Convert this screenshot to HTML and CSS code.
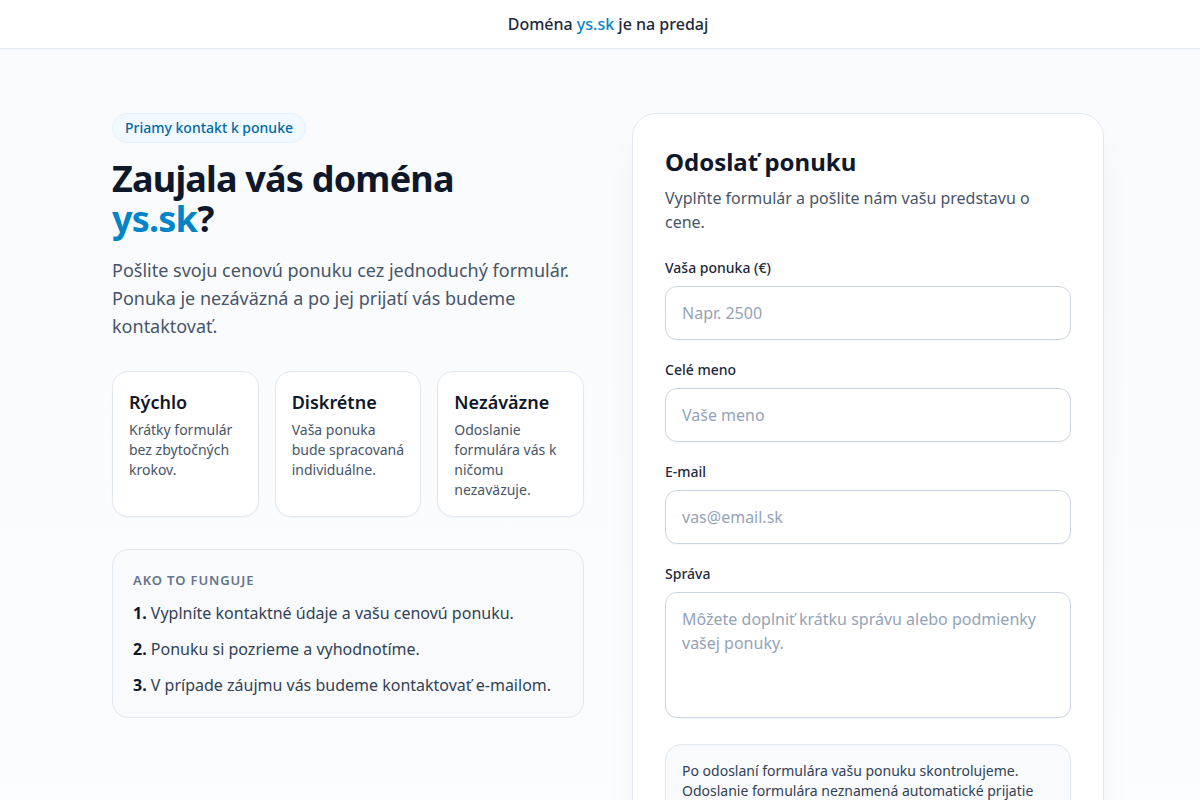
FILE: index.html
```html
<!DOCTYPE html>
<html lang="sk">
<head>
<meta charset="utf-8">
<title>Doména ys.sk je na predaj</title>
<link rel="stylesheet" href="styles.css">
</head>
<body>
<header class="topbar">
  <p class="topbar-text">Doména <span class="accent">ys.sk</span> je na predaj</p>
</header>
<main class="page">
  <section class="intro">
    <span class="badge">Priamy kontakt k ponuke</span>
    <h1 class="title">Zaujala vás doména <span class="accent">ys.sk</span>?</h1>
    <p class="lead">Pošlite svoju cenovú ponuku cez jednoduchý formulár. Ponuka je nezáväzná a po jej prijatí vás budeme kontaktovať.</p>
    <div class="features">
      <div class="feature">
        <h3 class="feature-title">Rýchlo</h3>
        <p class="feature-text">Krátky formulár bez zbytočných krokov.</p>
      </div>
      <div class="feature">
        <h3 class="feature-title">Diskrétne</h3>
        <p class="feature-text">Vaša ponuka bude spracovaná individuálne.</p>
      </div>
      <div class="feature">
        <h3 class="feature-title">Nezáväzne</h3>
        <p class="feature-text">Odoslanie formulára vás k ničomu nezaväzuje.</p>
      </div>
    </div>
    <div class="howto">
      <p class="howto-title">Ako to funguje</p>
      <ol class="steps">
        <li><b>1.</b> Vyplníte kontaktné údaje a vašu cenovú ponuku.</li>
        <li><b>2.</b> Ponuku si pozrieme a vyhodnotíme.</li>
        <li><b>3.</b> V prípade záujmu vás budeme kontaktovať e-mailom.</li>
      </ol>
    </div>
  </section>
  <section class="form-card">
    <h2 class="form-title">Odoslať ponuku</h2>
    <p class="form-sub">Vyplňte formulár a pošlite nám vašu predstavu o cene.</p>
    <form class="form">
      <label class="field">
        <span class="label">Vaša ponuka (€)</span>
        <input class="input" type="text" placeholder="Napr. 2500">
      </label>
      <label class="field">
        <span class="label">Celé meno</span>
        <input class="input" type="text" placeholder="Vaše meno">
      </label>
      <label class="field">
        <span class="label">E-mail</span>
        <input class="input" type="text" placeholder="vas@email.sk">
      </label>
      <label class="field">
        <span class="label">Správa</span>
        <textarea class="input textarea" rows="4" placeholder="Môžete doplniť krátku správu alebo podmienky vašej ponuky."></textarea>
      </label>
      <div class="note">Po odoslaní formulára vašu ponuku skontrolujeme. Odoslanie formulára neznamená automatické prijatie ponuky a zakladá len nezáväzný kontakt.</div>
    </form>
  </section>
</main>
</body>
</html>
```

FILE: styles.css
```css
* { box-sizing: border-box; }
html, body { margin: 0; padding: 0; }
body {
  font-family: "Noto Sans", "Open Sans", sans-serif;
  color: #0f172a;
  background: linear-gradient(to bottom, #f8fafc 0%, #fcfdfe 100%);
  min-height: 100vh;
}
.accent { color: #0284c7; }

.topbar {
  height: 49px;
  background: #ffffff;
  border-bottom: 1px solid #e2e8f0;
  display: flex;
  align-items: center;
  justify-content: center;
  padding-left: 16px;
}
.topbar-text {
  margin: 0;
  font-size: 16px;
  line-height: 24px;
  font-weight: 500;
  color: #1e293b;
}

.page {
  width: 992px;
  margin-left: calc(50% - 488px);
  padding-top: 64px;
  display: grid;
  grid-template-columns: 472px 472px;
  column-gap: 48px;
  align-items: start;
}

.intro { display: flex; flex-direction: column; align-items: flex-start; }
.badge {
  display: inline-block;
  font-size: 14px;
  line-height: 20px;
  font-weight: 500;
  color: #0369a1;
  background: #f0f9ff;
  border: 1px solid #e0f2fe;
  border-radius: 999px;
  padding: 4px 12px;
}
.title {
  margin: 16px 0 0;
  max-width: 420px;
  font-size: 36px;
  line-height: 40px;
  font-weight: 700;
  letter-spacing: -0.8px;
  color: #0f172a;
}
.lead {
  margin: 17px 0 0;
  font-size: 18px;
  line-height: 28px;
  color: #475569;
}

.features {
  margin-top: 31px;
  width: 100%;
  display: grid;
  grid-template-columns: repeat(3, 1fr);
  gap: 16px;
}
.feature {
  background: #ffffff;
  border: 1px solid #e2e8f0;
  border-radius: 16px;
  padding: 16px;
  box-shadow: 0 1px 2px rgba(15, 23, 42, 0.04);
}
.feature-title {
  margin: 0;
  font-size: 18px;
  line-height: 28px;
  font-weight: 600;
  color: #0f172a;
}
.feature-text {
  margin: 4px 0 0;
  font-size: 14px;
  line-height: 20px;
  color: #475569;
}

.howto {
  margin-top: 32px;
  width: 100%;
  background: #f8fafc;
  border: 1px solid #e2e8f0;
  border-radius: 16px;
  padding: 20px;
}
.howto-title {
  margin: 0;
  font-size: 13px;
  line-height: 20px;
  font-weight: 600;
  letter-spacing: 0.9px;
  text-transform: uppercase;
  color: #64748b;
}
.steps {
  list-style: none;
  margin: 11px 0 0;
  padding: 0;
  display: flex;
  flex-direction: column;
  gap: 12px;
}
.steps li {
  font-size: 16px;
  line-height: 24px;
  color: #334155;
}
.steps b { color: #0f172a; font-weight: 700; }

.form-card {
  background: #ffffff;
  border: 1px solid #e2e8f0;
  border-radius: 24px;
  padding: 32px;
  box-shadow: 0 20px 40px -16px rgba(15, 23, 42, 0.10);
}
.form-title {
  margin: 0;
  font-size: 24px;
  line-height: 32px;
  font-weight: 700;
  color: #0f172a;
}
.form-sub {
  margin: 8px 0 0;
  font-size: 16px;
  line-height: 24px;
  color: #475569;
}
.form {
  margin-top: 24px;
  display: flex;
  flex-direction: column;
  gap: 20px;
}
.field { display: flex; flex-direction: column; gap: 8px; }
.label {
  font-size: 14px;
  line-height: 20px;
  font-weight: 500;
  color: #1e293b;
}
.input {
  width: 100%;
  font-family: inherit;
  font-size: 16px;
  line-height: 24px;
  padding: 14px 16px;
  border: 1px solid #cbd5e1;
  border-radius: 12px;
  background: #ffffff;
  color: #0f172a;
  outline: none;
  box-shadow: 0 1px 2px rgba(15, 23, 42, 0.04);
}
.input::placeholder { color: #94a3b8; }
.textarea { resize: none; display: block; height: 126px; }
.note {
  margin-top: 6px;
  background: #f8fafc;
  border: 1px solid #e2e8f0;
  border-radius: 16px;
  padding: 16px;
  font-size: 14px;
  line-height: 20px;
  color: #334155;
}
```
